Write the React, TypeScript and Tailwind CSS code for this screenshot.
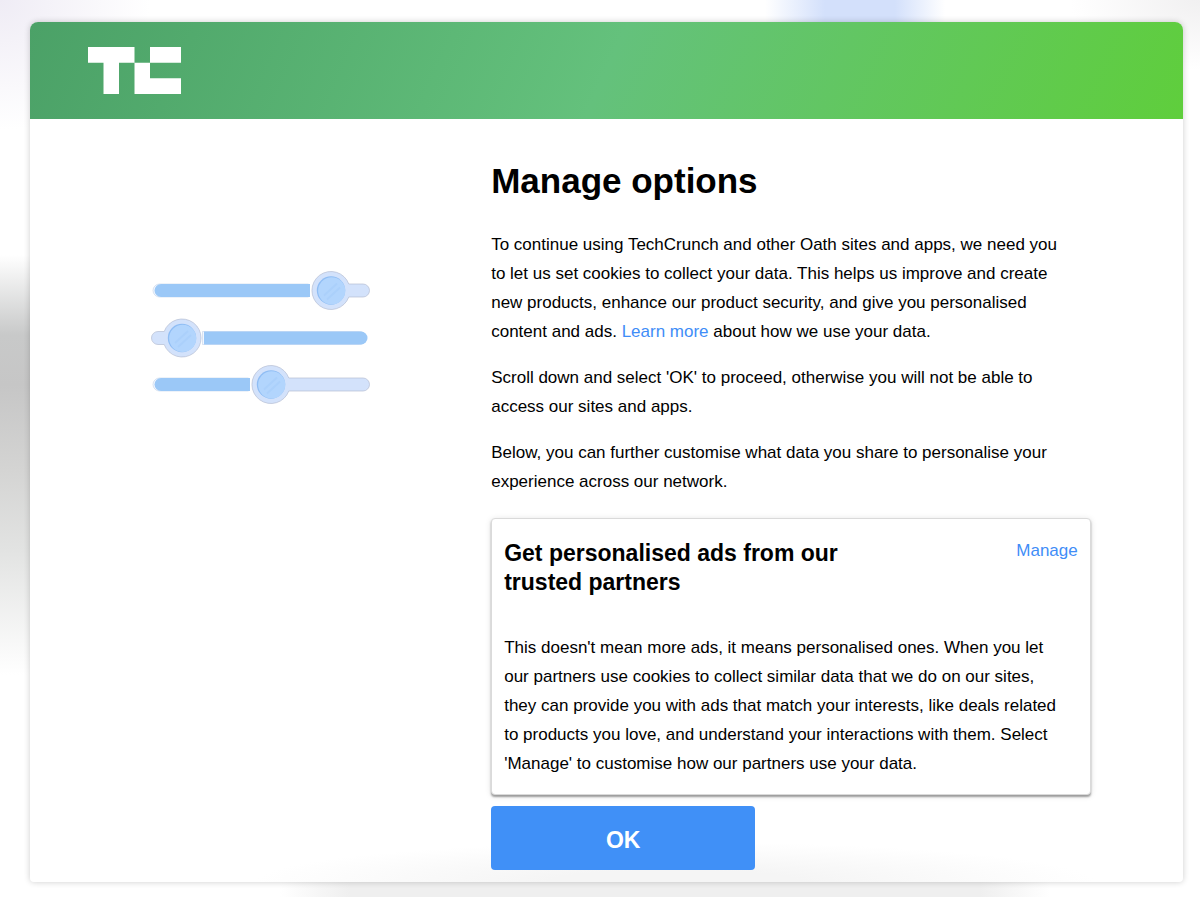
type SliderProps = {
  y: number
  knob: number
  start: number
  end: number
  filled: "left" | "right"
}

// One horizontal track with a round knob; the filled part stops just short of the knob
function SliderTrack({ y, knob, start, end, filled }: SliderProps) {
  const left = filled === "left"
  const bar = left
    ? `M${start + 7} ${y - 6.5}H${knob - 21}V${y + 6.5}H${start + 7}A6.5 6.5 0 0 1 ${start + 7} ${y - 6.5}Z`
    : `M${knob + 22} ${y - 6.5}H${end - 7}A6.5 6.5 0 0 1 ${end - 7} ${y + 6.5}H${knob + 22}Z`
  const tail = left
    ? `M${knob + 17.8} ${y - 6.5}H${end - 7}A6.5 6.5 0 0 1 ${end - 7} ${y + 6.5}H${knob + 17.8}A19 19 0 1 1 ${knob + 17.8} ${y - 6.5}Z`
    : `M${knob - 17.8} ${y - 6.5}H${start + 7}A6.5 6.5 0 0 0 ${start + 7} ${y + 6.5}H${knob - 17.8}A19 19 0 1 0 ${knob - 17.8} ${y - 6.5}Z`

  return (
    <g>
      <path d={bar} transform="translate(-1.5 0)" fill="#f3f7fe" stroke="#c3d3ea" strokeWidth="0.6" />
      <path d={bar} fill="#9bc8f7" />
      <path d={tail} fill="#d3e2fb" stroke="#b5bdd3" strokeWidth="0.7" />
      <circle cx={knob} cy={y} r="14.2" fill="#8fbdf4" />
      <circle cx={knob + 0.7} cy={y + 0.3} r="13.6" fill="#b2d5fd" />
      <path
        d={`M${knob - 7} ${y + 5}L${knob + 6} ${y - 7}M${knob - 4} ${y + 9}L${knob + 9} ${y - 3}`}
        stroke="#abd0fb"
        strokeWidth="2"
      />
    </g>
  )
}

function SlidersIllustration() {
  return (
    <svg width="222" height="138" viewBox="0 0 222 138" fill="none" aria-hidden="true">
      <SliderTrack y={22.5} knob={181} start={4} end={220} filled="left" />
      <SliderTrack y={70} knob={32} start={1} end={218} filled="right" />
      <SliderTrack y={116.5} knob={121} start={4} end={220} filled="left" />
    </svg>
  )
}

function Logo() {
  return (
    <svg width="93" height="47" viewBox="0 0 6 3" preserveAspectRatio="none" role="img" aria-label="TechCrunch">
      <path d="M0 0H3V1H2V3H1V1H0ZM4 0H6V1H4V2H6V3H3V1H4Z" fill="#fff" />
    </svg>
  )
}

function PartnersCard() {
  return (
    <section className="rounded border border-[#dadada] bg-white px-3 pt-5 pb-4 shadow-[0_2px_2px_rgba(0,0,0,0.35),0_1px_6px_rgba(0,0,0,0.12)]">
      <div className="flex items-start justify-between">
        <h2 className="w-[360px] text-[23px] leading-[29px] font-bold">
          Get personalised ads from our trusted partners
        </h2>
        <a href="#manage" className="leading-6 text-[#3f8df7]">
          Manage
        </a>
      </div>
      <p className="mt-9 max-w-[562px]">
        This doesn't mean more ads, it means personalised ones. When you let our partners use cookies to collect
        similar data that we do on our sites, they can provide you with ads that match your interests, like deals
        related to products you love, and understand your interactions with them. Select 'Manage' to customise how our
        partners use your data.
      </p>
    </section>
  )
}

export default function App() {
  return (
    <div className="min-h-screen bg-white bg-[linear-gradient(to_right,transparent_765px,#d3e0fb_825px,#d3e0fb_895px,transparent_945px),radial-gradient(150px_130px_at_0px_0px,#efecf5,transparent),radial-gradient(130px_70px_at_100%_0px,#f1f0f1,transparent),linear-gradient(to_right,transparent_280px,#efefef_350px,#efefef_980px,transparent_1050px),linear-gradient(to_bottom,transparent_255px,#c8c9c9_335px,#c6c6c6_385px,#d4d4d3_470px,#e2e3e2_550px,transparent_675px)] bg-[size:100%_22px,100%_100%,100%_100%,100%_15px,40px_100%] bg-[position:0_0,0_0,0_0,0_100%,0_0] bg-no-repeat pt-[22px] pr-[17px] pb-[15px] pl-[30px] font-['Helvetica_Neue','Liberation_Sans',Arial,sans-serif] text-[17px] leading-[29px] text-black">
      <div className="overflow-hidden rounded-t-lg rounded-b-sm bg-white shadow-[0_0_6px_rgba(0,0,0,0.2)]">
        {/* Header */}
        <header className="flex h-[97px] items-center bg-[linear-gradient(114deg,#4ba167,#64c17c_50%,#5fce3c)] pl-[58px]">
          <Logo />
        </header>

        <main className="flex bg-[radial-gradient(420px_40px_at_645px_100%,#f5f5f5_30%,transparent)] pb-3">
          <div className="flex w-2/5 justify-center pt-[149px]">
            <SlidersIllustration />
          </div>

          <div className="w-[52%] pt-10">
            <h1 className="text-[35px] leading-[44px] font-bold">Manage options</h1>
            <div className="mt-[27px] flex max-w-[575px] flex-col gap-[17px]">
              <p>
                To continue using TechCrunch and other Oath sites and apps, we need you to let us set cookies to
                collect your data. This helps us improve and create new products, enhance our product security, and
                give you personalised content and ads.{" "}
                <a href="#learn-more" className="text-[#3f8df7]">
                  Learn more
                </a>{" "}
                about how we use your data.
              </p>
              <p>
                Scroll down and select 'OK' to proceed, otherwise you will not be able to access our sites and apps.
              </p>
              <p>
                Below, you can further customise what data you share to personalise your experience across our network.
              </p>
            </div>

            <div className="mt-[22px]">
              <PartnersCard />
            </div>
            <button
              type="button"
              className="mt-[11px] block h-16 w-[264px] rounded bg-[#4090f7] pt-1 text-[23px] font-bold text-white"
            >
              OK
            </button>
          </div>
        </main>
      </div>
    </div>
  )
}
